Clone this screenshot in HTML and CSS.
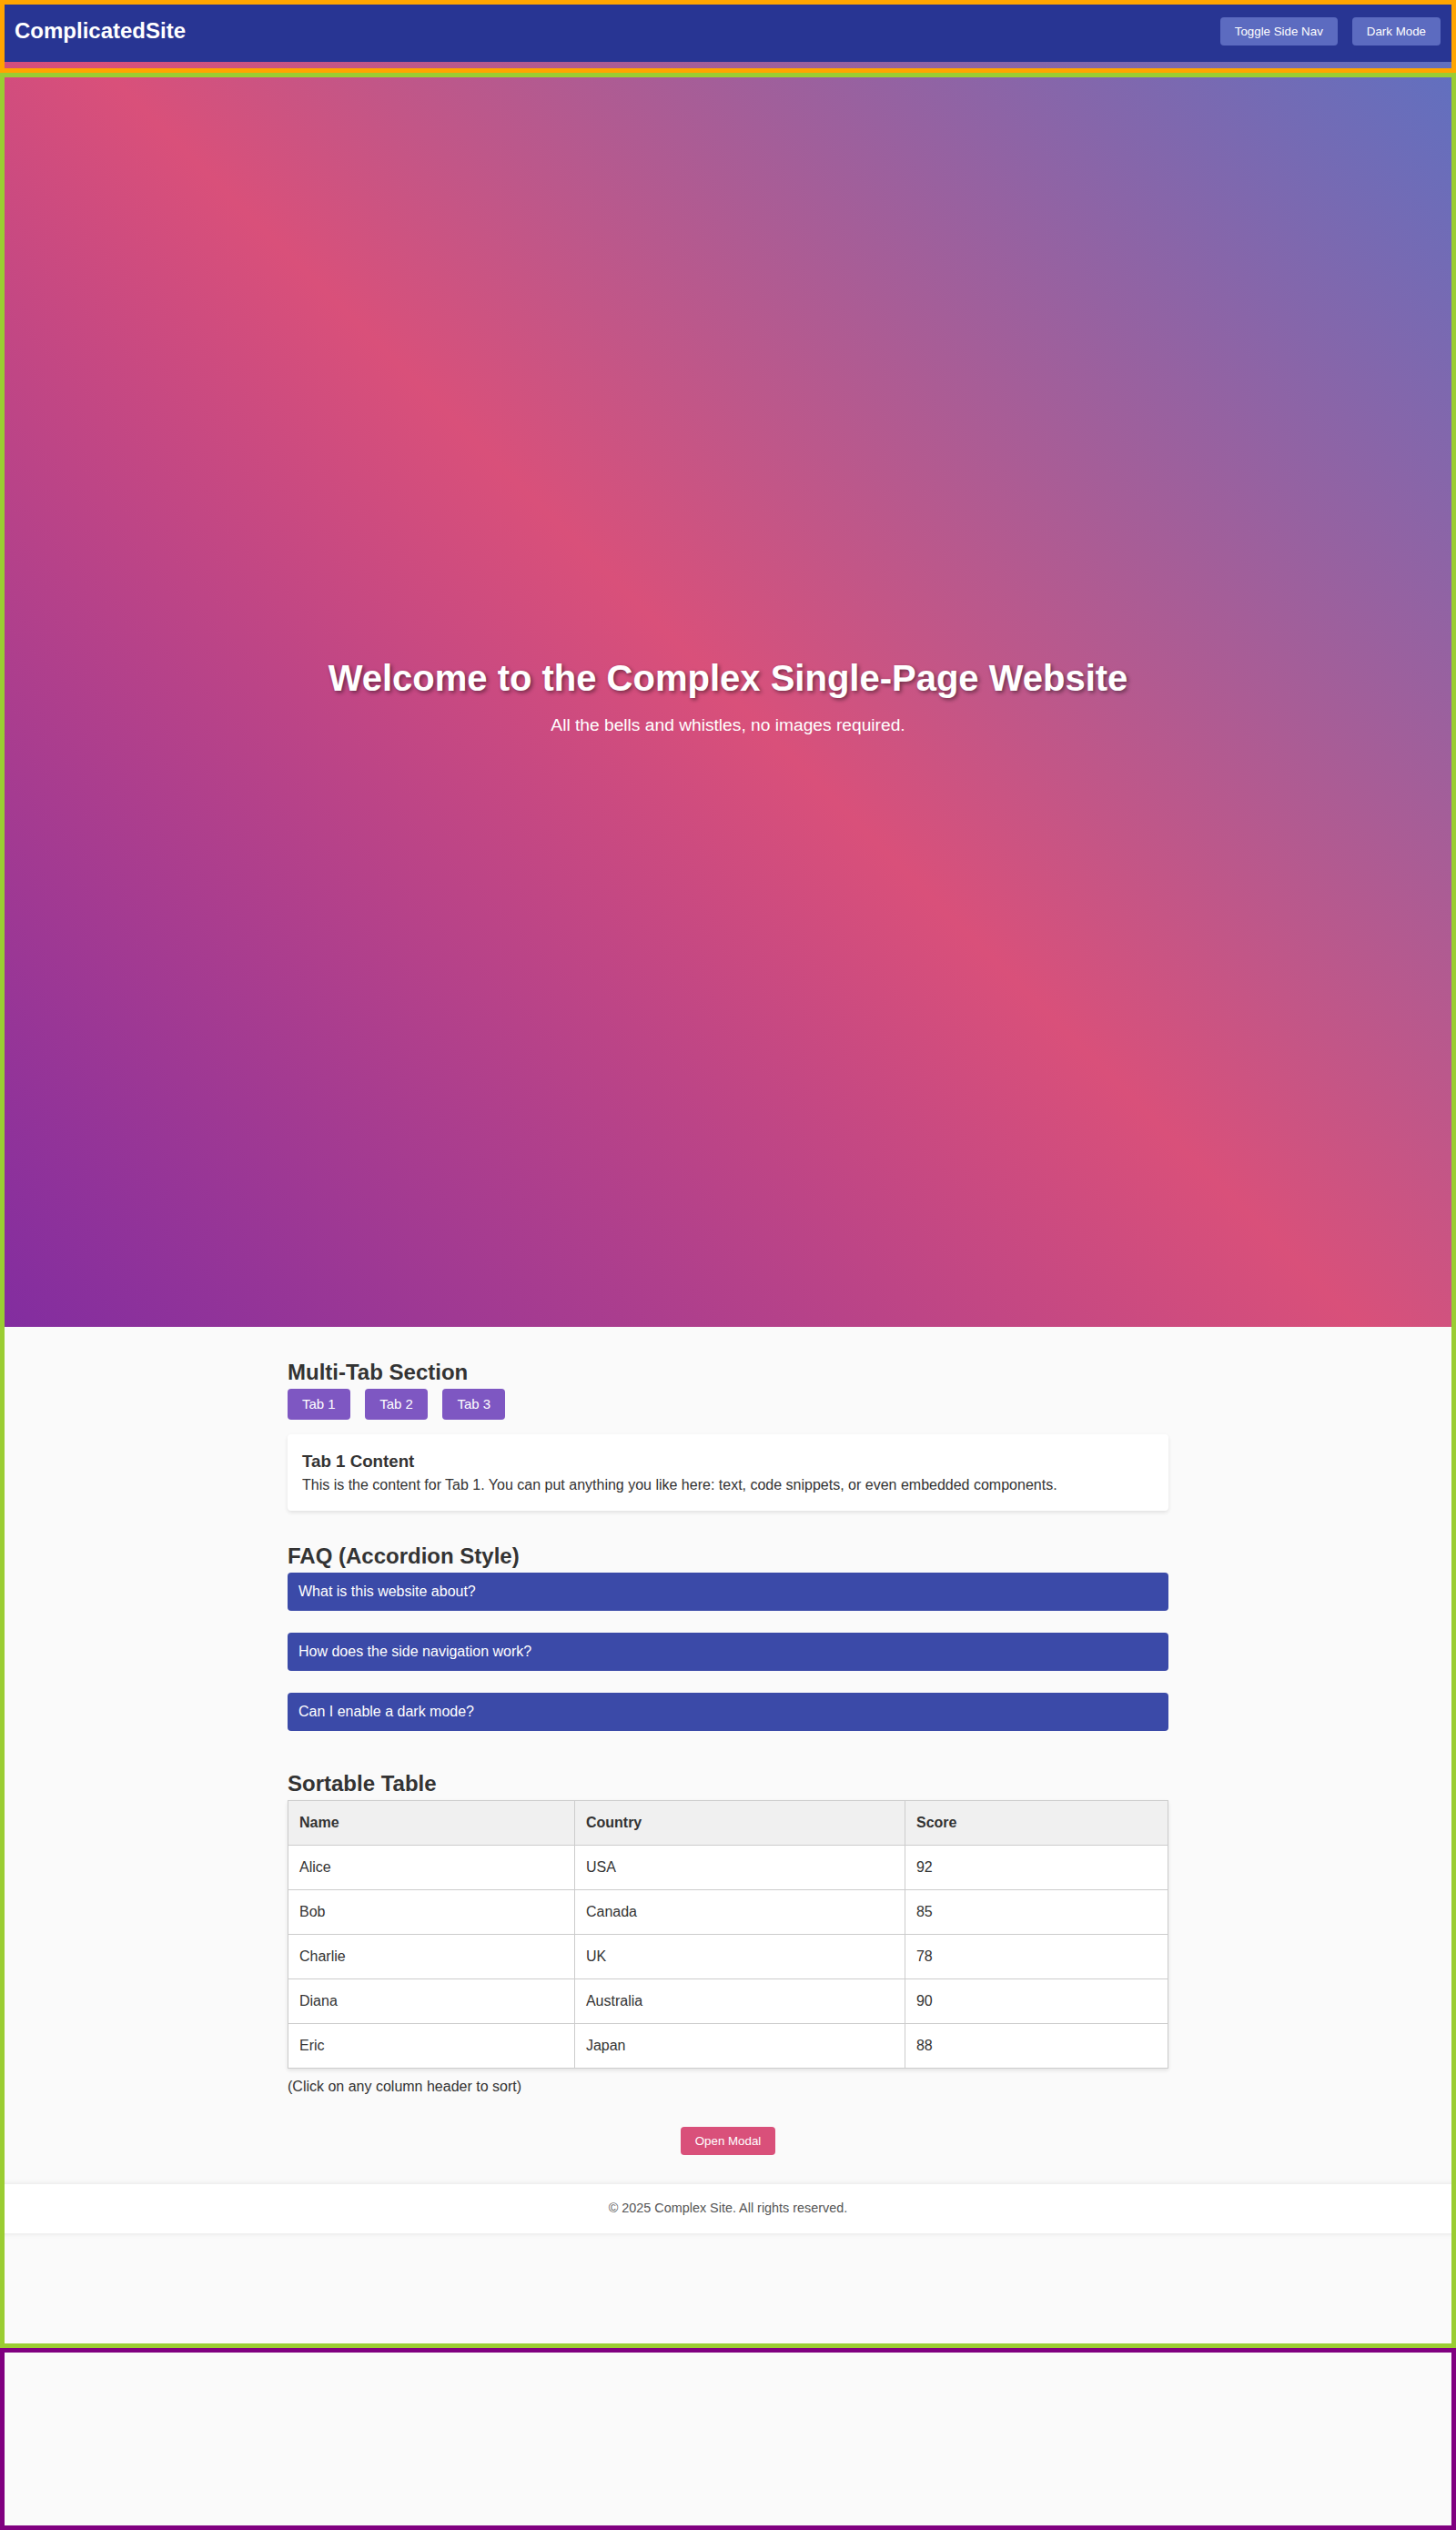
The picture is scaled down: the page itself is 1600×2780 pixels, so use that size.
FILE: index.html
```html
<!DOCTYPE html>
<html lang="en">
<head>
<meta charset="utf-8">
<title>ComplicatedSite</title>
<link rel="stylesheet" href="styles.css">
</head>
<body>
<header class="site-header">
  <nav class="navbar">
    <div class="logo">ComplicatedSite</div>
    <div class="nav-actions">
      <button class="nav-btn">Toggle Side Nav</button>
      <button class="nav-btn">Dark Mode</button>
    </div>
  </nav>
  <div class="header-strip"></div>
</header>
<main class="site-main">
  <section class="hero">
    <h1>Welcome to the Complex Single-Page Website</h1>
    <p>All the bells and whistles, no images required.</p>
  </section>
  <div class="container">
    <section class="block">
      <h2>Multi-Tab Section</h2>
      <div class="tabs">
        <button class="tab">Tab 1</button>
        <button class="tab">Tab 2</button>
        <button class="tab">Tab 3</button>
      </div>
      <div class="tab-panel">
        <h3>Tab 1 Content</h3>
        <p>This is the content for Tab 1. You can put anything you like here: text, code snippets, or even embedded components.</p>
      </div>
    </section>
    <section class="block">
      <h2>FAQ (Accordion Style)</h2>
      <div class="faq-list">
        <div class="faq-item"><button class="faq-q">What is this website about?</button><div class="faq-a"></div></div>
        <div class="faq-item"><button class="faq-q">How does the side navigation work?</button><div class="faq-a"></div></div>
        <div class="faq-item"><button class="faq-q">Can I enable a dark mode?</button><div class="faq-a"></div></div>
      </div>
    </section>
    <section class="block">
      <h2>Sortable Table</h2>
      <table class="data-table">
        <thead>
          <tr><th>Name</th><th>Country</th><th>Score</th></tr>
        </thead>
        <tbody>
          <tr><td>Alice</td><td>USA</td><td>92</td></tr>
          <tr><td>Bob</td><td>Canada</td><td>85</td></tr>
          <tr><td>Charlie</td><td>UK</td><td>78</td></tr>
          <tr><td>Diana</td><td>Australia</td><td>90</td></tr>
          <tr><td>Eric</td><td>Japan</td><td>88</td></tr>
        </tbody>
      </table>
      <p class="hint">(Click on any column header to sort)</p>
    </section>
    <section class="block modal-block">
      <button class="modal-btn">Open Modal</button>
    </section>
  </div>
  <footer class="site-footer">© 2025 Complex Site. All rights reserved.</footer>
</main>
<div class="bottom-box"></div>
</body>
</html>
```

FILE: styles.css
```css
html, body {
  margin: 0;
  padding: 0;
}

body {
  background: #fafafa;
  color: #333;
  font-family: "Liberation Sans", Arial, Helvetica, sans-serif;
  line-height: 1.5;
}

:root {
  --hero-gradient: linear-gradient(45deg, #822da0 0%, #d9507a 50%, #6070c0 100%);
}

/* Header */
.site-header {
  outline: 5px solid #ffa500;
  outline-offset: -5px;
}

.navbar {
  display: flex;
  align-items: center;
  justify-content: space-between;
  background: #283593;
  padding: 16px 17px 16px 16px;
}

.logo {
  color: #fff;
  font-size: 24px;
  font-weight: bold;
  line-height: 36px;
}

.nav-actions {
  display: flex;
  gap: 16px;
}

.nav-btn {
  background: #5c6bc0;
  color: #fff;
  border: none;
  border-radius: 4px;
  padding: 8px 16px;
  font-family: "Liberation Sans", Arial, sans-serif;
  font-size: 13.333px;
  line-height: normal;
}

.header-strip {
  height: 12px;
  background: var(--hero-gradient);
  background-size: 100% 1390px;
  background-position: 0 0;
  background-repeat: no-repeat;
}

/* Main */
.site-main {
  outline: 5px solid #9acd32;
  outline-offset: -5px;
  min-height: 2500px;
  box-sizing: border-box;
}

.hero {
  height: 1378px;
  box-sizing: border-box;
  padding-bottom: 12px;
  display: flex;
  flex-direction: column;
  align-items: center;
  justify-content: center;
  text-align: center;
  color: #fff;
  background: var(--hero-gradient);
  background-size: 100% 1390px;
  background-position: 0 -12px;
  background-repeat: no-repeat;
}

.hero h1 {
  margin: 0 0 8px;
  font-size: 40px;
  line-height: 1.5;
  text-shadow: 2px 2px 4px rgba(0, 0, 0, 0.45);
}

.hero p {
  margin: 0;
  font-size: 19.2px;
}

.container {
  max-width: 1000px;
  margin: 0 auto;
  padding: 0 16px;
  box-sizing: border-box;
}

.block {
  margin-top: 32px;
}

.block h2 {
  margin: 0;
  font-size: 24px;
  line-height: 1.5;
  color: #333;
}

/* Tabs */
.tabs {
  display: flex;
  gap: 16.5px;
}

.tab {
  background: #7e57c2;
  color: #fff;
  border: none;
  border-radius: 4px;
  padding: 8px 16px;
  font-family: "Liberation Sans", Arial, sans-serif;
  font-size: 15px;
  line-height: 18.3px;
}

.tab-panel {
  margin-top: 16px;
  background: #fff;
  border-radius: 4px;
  padding: 16px;
  box-shadow: 0 2px 4px rgba(0, 0, 0, 0.1);
}

.tab-panel h3 {
  margin: 0;
  font-size: 18.72px;
}

.tab-panel p {
  margin: 0;
}

/* FAQ */
.faq-list {
  display: flex;
  flex-direction: column;
  gap: 16px;
}

.faq-q {
  display: block;
  width: 100%;
  text-align: left;
  background: #3b4aa8;
  color: #fff;
  border: none;
  border-radius: 4px;
  padding: 12px;
  font-family: "Liberation Sans", Arial, sans-serif;
  font-size: 16px;
  line-height: normal;
}

.faq-a {
  height: 0;
  margin-top: 8px;
  overflow: hidden;
}

/* Table */
.data-table {
  width: 100%;
  border-collapse: collapse;
  background: #fff;
  box-shadow: 0 2px 4px rgba(0, 0, 0, 0.1);
}

.data-table th,
.data-table td {
  border: 1px solid #ccc;
  padding: 12px;
  text-align: left;
}

.data-table th {
  background: #f0f0f0;
  font-weight: bold;
}

.hint {
  margin: 8px 0 0;
}

/* Modal trigger */
.modal-block {
  margin-bottom: 32px;
  text-align: center;
}

.modal-btn {
  background: #d9507a;
  color: #fff;
  border: none;
  border-radius: 4px;
  padding: 8px 16px;
  font-family: "Liberation Sans", Arial, sans-serif;
  font-size: 13.333px;
  line-height: normal;
}

/* Footer */
.site-footer {
  background: #fff;
  text-align: center;
  padding: 16px;
  font-size: 14.4px;
  color: #555;
  box-shadow: 0 0 6px rgba(0, 0, 0, 0.1);
}

/* Bottom box */
.bottom-box {
  height: 200px;
  outline: 5px solid #800080;
  outline-offset: -5px;
}
```
